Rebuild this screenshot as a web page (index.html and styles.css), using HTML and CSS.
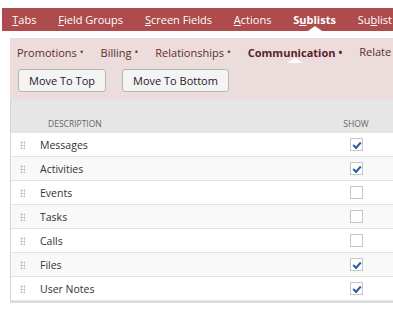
FILE: index.html
```html
<!DOCTYPE html>
<html>
<head>
<meta charset="utf-8">
<link rel="stylesheet" href="styles.css">
</head>
<body>
<div class="page">
  <nav class="tabs">
    <span class="tab"><u>T</u>abs</span>
    <span class="tab"><u>F</u>ield Groups</span>
    <span class="tab"><u>S</u>creen Fields</span>
    <span class="tab"><u>A</u>ctions</span>
    <span class="tab active">S<u>u</u>blists</span>
    <span class="tab">Su<u>b</u>list</span>
  </nav>
  <div class="panel">
    <div class="subtabs">
      <span class="subtab">Promotions<i>•</i></span>
      <span class="subtab">Billing<i>•</i></span>
      <span class="subtab">Relationships<i>•</i></span>
      <span class="subtab active">Communication<i>•</i></span>
      <span class="subtab">Relate</span>
    </div>
    <div class="buttons">
      <button class="btn">Move To Top</button>
      <button class="btn">Move To Bottom</button>
    </div>
  </div>
  <div class="grid">
    <div class="row head">
      <span class="handle-cell"></span>
      <span class="desc">DESCRIPTION</span>
      <span class="show">SHOW</span>
    </div>
    <div class="row"><span class="handle-cell"><span class="handle"></span></span><span class="desc">Messages</span><span class="show"><span class="cb on"></span></span></div>
    <div class="row alt"><span class="handle-cell"><span class="handle"></span></span><span class="desc">Activities</span><span class="show"><span class="cb on"></span></span></div>
    <div class="row"><span class="handle-cell"><span class="handle"></span></span><span class="desc">Events</span><span class="show"><span class="cb"></span></span></div>
    <div class="row alt"><span class="handle-cell"><span class="handle"></span></span><span class="desc">Tasks</span><span class="show"><span class="cb"></span></span></div>
    <div class="row"><span class="handle-cell"><span class="handle"></span></span><span class="desc">Calls</span><span class="show"><span class="cb"></span></span></div>
    <div class="row alt"><span class="handle-cell"><span class="handle"></span></span><span class="desc">Files</span><span class="show"><span class="cb on"></span></span></div>
    <div class="row last"><span class="handle-cell"><span class="handle"></span></span><span class="desc">User Notes</span><span class="show"><span class="cb on"></span></span></div>
  </div>
</div>
</body>
</html>
```
FILE: styles.css
```css
* { box-sizing: border-box; }
html, body { margin: 0; padding: 0; background: #fff; }
body { font-family: "Open Sans", "DejaVu Sans", sans-serif; overflow: hidden; width: 393px; height: 319px; }
.page { padding: 8px 0 0 2px; width: 393px; overflow: hidden; }

.tabs { display: flex; height: 23px; background: #ad4b4d; color: #fff; font-size: 11px; line-height: 23px; white-space: nowrap; }
.tab { position: relative; padding: 0 11.5px 0 10.3px; flex: none; }
.tab u { text-decoration: underline; text-underline-offset: 1px; }
.tab.active { font-weight: 700; }
.tab.active::after { content: ""; position: absolute; left: 50%; bottom: 0; margin-left: -7px; border-left: 7px solid transparent; border-right: 7px solid transparent; border-bottom: 5px solid #fff; }

.panel { margin: 7px 0 0 8px; background: #ecdcdc; padding: 0 0 8px 0; }
.subtabs { display: flex; height: 25px; white-space: nowrap; font-size: 11px; color: #5e2c2c; padding-left: 7px; overflow: hidden; }
.subtab { position: relative; padding: 6px 0 0 0; margin-right: 17px; line-height: 16px; flex: none; }
.subtab i { font-style: normal; font-size: 10px; margin-left: 3px; vertical-align: 1px; }
.subtab.active { font-weight: 700; color: #5a1f24; }
.subtab.active::after { content: ""; position: absolute; left: 50%; bottom: 0; margin-left: -8px; border-left: 8px solid transparent; border-right: 8px solid transparent; border-bottom: 5px solid #fff; }

.buttons { display: flex; gap: 16px; margin-top: 6px; padding-left: 8px; }
.btn { font-family: inherit; font-size: 11px; color: #222; background: #f4f4f4; border: 1px solid #b5b5b5; border-radius: 3px; height: 23px; padding: 0 10px; line-height: 20px; margin: 0; }

.grid { margin-left: 8px; border-left: 1px solid #d4d4d4; border-bottom: 2px solid #dadada; width: 520px; }
.row { display: grid; grid-template-columns: 29px 296px 40px 1fr; height: 24px; align-items: center; border-bottom: 1px solid #e4e4e4; background: #fff; font-size: 10.5px; color: #333; }
.row.alt { background: #f9f9f9; }
.row.last { border-bottom: 1px solid #e6e6e6; }
.row.head { background: #e6e6e6; height: 33px; align-items: end; padding-bottom: 4px; font-size: 8.5px; color: #666; border-bottom: none; }
.row.head .desc { padding-left: 8px; }
.handle-cell { display: flex; padding-left: 9px; }
.handle { width: 5px; height: 8px; background-image: radial-gradient(circle, #b5b5b5 0.9px, transparent 1.1px); background-size: 3px 3px; }
.show { display: flex; justify-content: center; }
.cb { display: block; width: 13px; height: 13px; border: 1px solid #c6c6c6; background: #fff; position: relative; }
.cb.on::after { content: ""; position: absolute; top: 2.5px; left: 2px; width: 6px; height: 3px; border-left: 2.4px solid #2d5ea8; border-bottom: 2.4px solid #2d5ea8; transform: rotate(-48deg); }
```
